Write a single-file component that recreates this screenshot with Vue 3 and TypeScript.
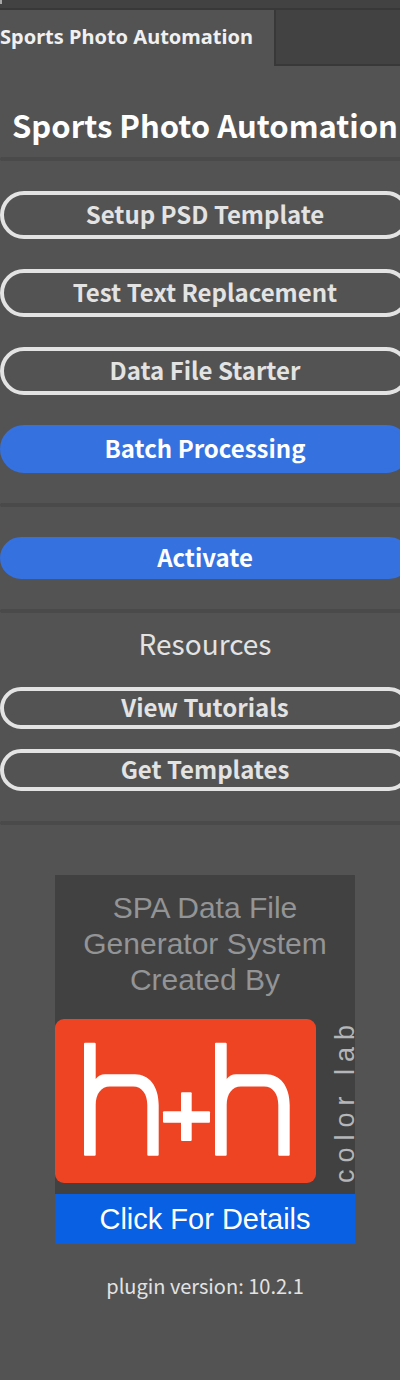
<script setup lang="ts">
interface Action {
  label: string
  primary?: boolean
}

const actions: Action[] = [
  { label: 'Setup PSD Template' },
  { label: 'Test Text Replacement' },
  { label: 'Data File Starter' },
  { label: 'Batch Processing', primary: true },
]
const resources: string[] = ['View Tutorials', 'Get Templates']
const version = '10.2.1'
</script>

<template>
  <div class="panel">
    <div class="strip"></div>
    <div class="tabs" role="tablist">
      <button class="tab" type="button" role="tab" aria-selected="true">Sports Photo Automation</button>
      <div class="tab-rest"></div>
    </div>

    <main class="content">
      <h1 class="title">Sports Photo Automation</h1>
      <hr class="rule" />
      <div class="group">
        <button
          v-for="a in actions"
          :key="a.label"
          type="button"
          class="btn"
          :class="{ primary: a.primary }"
        >{{ a.label }}</button>
      </div>
      <hr class="rule" />
      <div class="group">
        <button type="button" class="btn compact primary">Activate</button>
      </div>
      <hr class="rule" />
      <section class="resources">
        <h2 class="subtitle">Resources</h2>
        <button v-for="r in resources" :key="r" type="button" class="btn compact">{{ r }}</button>
      </section>
      <hr class="rule" />

      <a class="card" href="#details">
        <span class="credit">SPA Data File<br />Generator System<br />Created By</span>
        <span class="brand">
          <svg class="logo" viewBox="0 0 261 164" role="img" aria-label="h+h">
            <rect width="261" height="164" rx="9" fill="#ee4424" />
            <g fill="#fff">
              <path id="arch" d="M30 23.7h9.7a1 1 0 0 1 1 1V60Q44 55.3 50 55.3H80C94 55.3 103.7 67 103.7 86V135.7a1 1 0 0 1-1 1H93.3a1 1 0 0 1-1-1V86C92.3 75 87 67.5 78 67.5H55C46 67.5 40.7 75 40.7 86V135.7a1 1 0 0 1-1 1H30a1 1 0 0 1-1-1V24.7a1 1 0 0 1 1-1Z" />
              <use href="#arch" x="131" />
              <rect x="108" y="92.3" width="47" height="11.4" rx="1" />
              <rect x="126" y="73.3" width="10.7" height="48.7" rx="1" />
            </g>
          </svg>
          <span class="lab">color lab</span>
        </span>
        <span class="cta">Click For Details</span>
      </a>

      <p class="version">plugin version: {{ version }}</p>
    </main>
  </div>
</template>

<style>
body {
  margin: 0;
  background: #535353;
}
</style>

<style scoped>
.panel {
  min-height: 100vh;
  overflow: hidden;
  background: #535353;
  color: #e3e3e3;
  font-family: "Noto Sans CJK SC", "Noto Sans", sans-serif;
}
.strip {
  height: 8px;
  background: #424242;
  border-bottom: 2px solid #383838;
}
.strip::before {
  content: "";
  display: block;
  width: 2px;
  height: 4px;
  background: #a8a8a8;
}
.tabs {
  display: flex;
  height: 56px;
}
.tab {
  margin: 0;
  padding: 0 21px 2px 0;
  border: 0;
  background: #535353;
  color: #f0f0f0;
  font: bold 20px/24px "Noto Sans", sans-serif;
  white-space: nowrap;
}
.tab-rest {
  flex: 1;
  border-left: 2px solid #383838;
  border-bottom: 2px solid #383838;
  background: #424242;
}
.content {
  display: flex;
  flex-direction: column;
  width: calc(100% + 10px);
}
.title {
  margin: 39px 0 12px;
  color: #fff;
  font-size: 31px;
  line-height: 40px;
  font-weight: 700;
  text-align: center;
  white-space: nowrap;
}
.rule {
  width: 100%;
  height: 4px;
  margin: 0;
  border: 0;
  border-radius: 2px;
  background: #4a4a4a;
}
.group {
  display: flex;
  flex-direction: column;
  gap: 30px;
  padding: 30px 0;
}
.btn {
  width: 100%;
  height: 48px;
  padding: 0 0 2px;
  border: 4px solid #e3e3e3;
  border-radius: 24px;
  background: transparent;
  color: #e3e3e3;
  font: bold 24px/32px "Noto Sans CJK SC", "Noto Sans", sans-serif;
}
.compact {
  height: 42px;
}
.primary {
  border-color: #3571df;
  background: #3571df;
  color: #fff;
}
.resources {
  display: flex;
  flex-direction: column;
  gap: 20px;
  padding: 12px 0 30px;
}
.subtitle {
  margin: 0 0 6px;
  font-size: 28px;
  line-height: 36px;
  font-weight: 400;
  text-align: center;
}
.card {
  display: flex;
  flex-direction: column;
  width: 300px;
  margin: 50px auto 0;
  background: #414141;
  font-family: "Liberation Sans", Arial, sans-serif;
  font-size: 30px;
  text-align: center;
  text-decoration: none;
}
.credit {
  padding: 15px 0 21px;
  color: #939496;
  line-height: 36px;
}
.brand {
  display: flex;
  justify-content: space-between;
  height: 164px;
  margin-bottom: 11px;
}
.logo {
  width: 261px;
  height: 164px;
}
.lab {
  writing-mode: vertical-rl;
  transform: rotate(180deg);
  color: #b5b6b9;
  font-size: 27px;
  line-height: 20px;
  letter-spacing: 7px;
  text-align: left;
  white-space: nowrap;
}
.cta {
  background: #0a60e2;
  color: #fff;
  font-size: 29px;
  line-height: 50px;
}
.version {
  margin: 28px 0 0;
  font-size: 20px;
  line-height: 28px;
  text-align: center;
}
</style>
